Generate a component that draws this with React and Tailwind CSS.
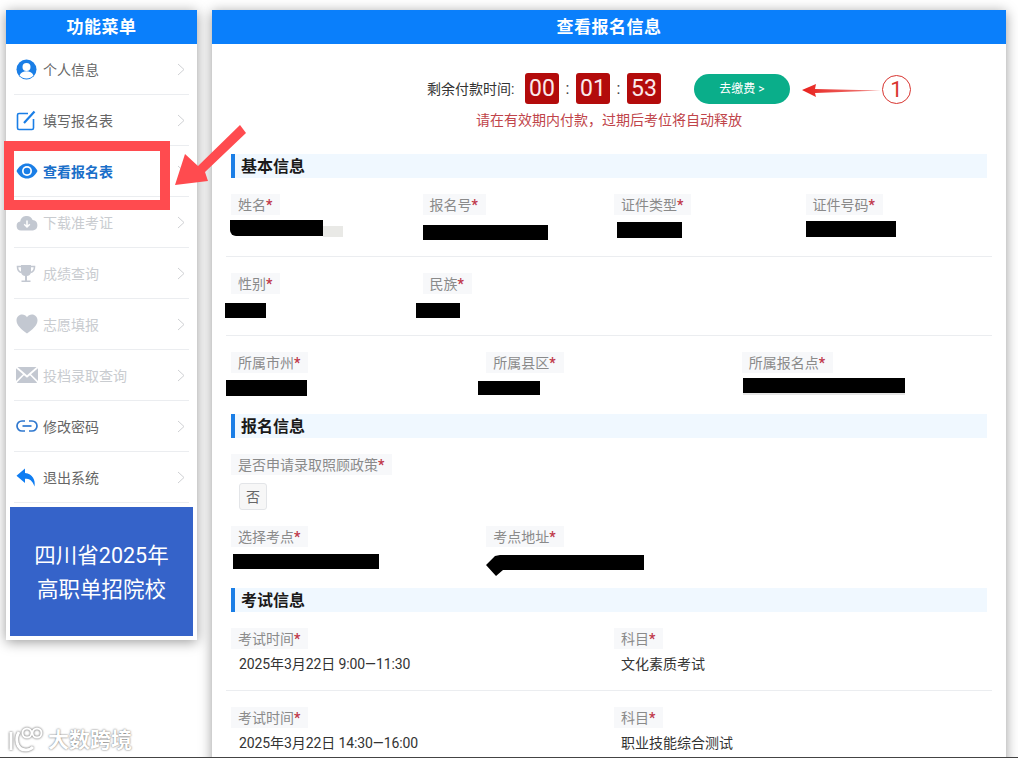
import React from "react";

const iconBlue = "#1a7ee6";
const iconGray = "#c3c8d1";

// menu icons, drawn to match the screenshot
const UserIcon = () => (
    <svg width="21" height="21" viewBox="0 0 21 21">
        <circle cx="10.5" cy="10.5" r="10" fill={iconBlue} />
        <circle cx="10.5" cy="8" r="4" fill="#fff" />
        <path d="M3.5 16.500c1.200-3 4-4.200 7-4.200s5.800 1.200 7 4.200c-1.800 1.900-4.300 3-7 3s-5.200-1.100-7-3z" fill="#fff" />
    </svg>
);

const EditIcon = () => (
    <svg width="21" height="21" viewBox="0 0 21 21" fill="none" stroke={iconBlue} strokeWidth="1.600">
        <path d="M12 3.500H3a1.500 1.500 0 0 0-1.500 1.500v13A1.500 1.500 0 0 0 3 19.500h13a1.500 1.500 0 0 0 1.500-1.500V9" />
        <path d="M8 13 18.500 1.500" strokeWidth="2.200" />
    </svg>
);

const EyeIcon = () => (
    <svg width="22" height="16" viewBox="0 0 22 16">
        <path d="M0.500 8C3 3 6.800 0.500 11 0.500S19 3 21.500 8C19 13 15.200 15.500 11 15.500S3 13 0.500 8z" fill={iconBlue} />
        <circle cx="11" cy="8" r="5" fill="#fff" />
        <circle cx="11" cy="8" r="3.300" fill={iconBlue} />
    </svg>
);

const CloudIcon = () => (
    <svg width="22" height="17" viewBox="0 0 22 17">
        <path d="M5 16.500a4.500 4.500 0 0 1-.8-8.900A6.500 6.500 0 0 1 16.600 6a5.300 5.300 0 0 1 .4 10.500z" fill={iconGray} />
        <path d="M11 6.500v6M8.200 10.200 11 13l2.800-2.800" fill="none" stroke="#fff" strokeWidth="1.500" />
    </svg>
);

const TrophyIcon = () => (
    <svg width="20" height="19" viewBox="0 0 20 19">
        <path d="M5 1h10v6.500c0 2.800-2.200 4.700-5 4.700s-5-1.900-5-4.700z" fill={iconGray} />
        <path d="M5 2.500H1.500c0 3.500 1.200 5.500 4 6M15 2.500h3.500c0 3.500-1.200 5.500-4 6" fill="none" stroke={iconGray} strokeWidth="1.600" />
        <path d="M9 12h2v4.500H9zM5.500 16.500h9V18h-9z" fill={iconGray} />
    </svg>
);

const HeartIcon = () => (
    <svg width="22" height="20" viewBox="0 0 22 20">
        <path d="M11 19.500C5.500 15.500.5 11.500.5 6.300.5 3 3 .5 6.100.5c2 0 3.800 1 4.900 2.700C12.100 1.500 13.900.5 15.900.5c3.100 0 5.600 2.500 5.600 5.800 0 5.200-5 9.200-10.500 13.200z" fill={iconGray} />
    </svg>
);

const MailIcon = () => (
    <svg width="22" height="16" viewBox="0 0 22 16">
        <path d="M1.500 0h19L11 8.200z" fill={iconGray} />
        <path d="M0 1.200 7 7.300 0 14zM22 1.200 15 7.300 22 14zM8 8.200l3 2.500 3-2.500L21 15.500a1 1 0 0 1-.5.500h-19a1 1 0 0 1-.5-.5z" fill={iconGray} />
    </svg>
);

const LinkIcon = () => (
    <svg width="22" height="12" viewBox="0 0 22 12" fill="none" stroke="#2f78cf" strokeWidth="1.700">
        <path d="M9 1H6a5 5 0 0 0 0 10h3M13 1h3a5 5 0 0 1 0 10h-3" />
        <path d="M6.500 6h9" />
    </svg>
);

const ReplyIcon = () => (
    <svg width="20" height="19" viewBox="0 0 20 19">
        <path d="M9 .5.500 7.700 9 15v-4.300c4.500 0 7.500 1.700 9.500 7.800 1.200-6.500-1.800-12.500-9.500-13.500z" fill="#0f7df2" />
    </svg>
);

const menu = [
    { label: "个人信息", icon: UserIcon },
    { label: "填写报名表", icon: EditIcon },
    { label: "查看报名表", icon: EyeIcon, active: true },
    { label: "下载准考证", icon: CloudIcon, disabled: true },
    { label: "成绩查询", icon: TrophyIcon, disabled: true },
    { label: "志愿填报", icon: HeartIcon, disabled: true },
    { label: "投档录取查询", icon: MailIcon, disabled: true },
    { label: "修改密码", icon: LinkIcon },
    { label: "退出系统", icon: ReplyIcon },
];

const MenuItem = ({ item }) => {
    const Icon = item.icon;
    let color = "text-[#666666]";
    if (item.active) color = "text-[#1a6fc9] font-bold";
    if (item.disabled) color = "text-[#c9ccd0]";

    return (
        <div className="mx-2 flex h-[51px] items-center border-b border-[#ebedf0] pl-[2px] pr-1">
            <span className="flex w-[27px] shrink-0 items-center"><Icon /></span>
            <span className={`flex-1 pt-[2px] text-sm ${color}`}>{item.label}</span>
            <svg width="8" height="13" viewBox="0 0 8 13" fill="none" stroke="#cfd1d4" strokeWidth="1">
                <path d="M1 1 7 6.500 1 12" />
            </svg>
        </div>
    );
};

const Sidebar = () => (
    <aside className="w-[191px] shrink-0 self-start bg-white pb-1 shadow-[0_2px_12px_rgba(0,0,0,0.4)]">
        <div className="flex h-[34px] items-center justify-center bg-[#0a7ffb] pt-[2px] text-[17px] font-bold tracking-[0.5px] text-white">功能菜单</div>
        {menu.map((item) => (
            <MenuItem key={item.label} item={item} />
        ))}
        <div className="mx-1 mt-1 flex h-[129px] flex-col items-center justify-center bg-[#3563c9] pt-[3px] text-[21.5px] leading-[34px] text-white">
            <div>四川省2025年</div>
            <div>高职单招院校</div>
        </div>
    </aside>
);

const Label = ({ children }) => (
    <div className="ml-[5px] flex h-[21px] w-fit items-center bg-[#f7f8fa] pl-[7px] pr-2 text-sm text-[#8a8a8a]">
        {children}
        <span className="font-bold text-[#c0394b]">*</span>
    </div>
);

// black marker strokes over the private values
const Redact = ({ className }) => <div className={`bg-black ${className}`} />;

const Section = ({ children }) => (
    <div className="mx-[5px] flex h-6 items-center border-l-4 border-[#1a7ee6] bg-[#f0f8ff] pl-[6px] pt-px text-[16px] font-bold text-[#1a1a1a]">{children}</div>
);

const Chip = ({ children }) => (
    <div className="flex h-[31px] w-[34px] items-center justify-center rounded-[3px] bg-[#b30b0b] pt-[2px] text-[23px] text-[#fbeaea]">{children}</div>
);

const Colon = () => <span className="w-[17px] text-center text-[#444444]">:</span>;

const ExamRow = ({ time, subject }) => (
    <div className="grid h-[79px] grid-cols-2 border-b border-[#ebedf0] pt-4">
        <div>
            <Label>考试时间</Label>
            <div className="ml-[13px] mt-[5px] text-sm tracking-[-0.1px] text-[#333333]">{time}</div>
        </div>
        <div>
            <Label>科目</Label>
            <div className="ml-3 mt-[5px] text-sm text-[#333333]">{subject}</div>
        </div>
    </div>
);

const Main = () => (
    <main className="w-[794px] shrink-0 bg-white shadow-[0_2px_12px_rgba(0,0,0,0.4)]">
        <div className="flex h-[34px] items-center justify-center bg-[#0a7ffb] pt-[2px] text-[17px] font-bold tracking-[0.5px] text-white">查看报名信息</div>
        <div className="px-[14px]">
            <div className="mt-[29px] flex h-[31px] items-center pl-[201px]">
                <span className="w-[98px] text-sm text-[#333333]">剩余付款时间:</span>
                <Chip>00</Chip>
                <Colon />
                <Chip>01</Chip>
                <Colon />
                <Chip>53</Chip>
                <div className="ml-[33px] flex h-[30px] w-24 items-center justify-center rounded-full bg-[#0aae8a] text-xs text-white">去缴费 &gt;</div>
            </div>
            <div className="mt-[6px] h-5 text-center text-sm leading-5 text-[#c0444a]">请在有效期内付款，过期后考位将自动释放</div>
            <div className="mt-6"><Section>基本信息</Section></div>

            <div className="grid h-[79px] grid-cols-4 border-b border-[#ebedf0] pt-4">
                <div>
                    <Label>姓名</Label>
                    <div className="ml-1 mt-[5px] flex">
                        <Redact className="h-4 w-[93px] rounded-bl-[6px]" />
                        <div className="mt-[6px] h-[11px] w-5 bg-[#e9e9e6]" />
                    </div>
                </div>
                <div>
                    <Label>报名号</Label>
                    <Redact className="ml-[5px] mt-[10px] h-[15px] w-[125px]" />
                </div>
                <div>
                    <Label>证件类型</Label>
                    <Redact className="ml-2 mt-[7px] h-4 w-[65px]" />
                </div>
                <div>
                    <Label>证件号码</Label>
                    <Redact className="ml-[5px] mt-[6px] h-4 w-[90px]" />
                </div>
            </div>

            <div className="grid h-[79px] grid-cols-4 border-b border-[#ebedf0] pt-4">
                <div>
                    <Label>性别</Label>
                    <Redact className="-ml-px mt-[9px] h-[15px] w-[41px]" />
                </div>
                <div>
                    <Label>民族</Label>
                    <Redact className="-ml-[2px] mt-[9px] h-[15px] w-11" />
                </div>
            </div>

            <div className="grid h-[78px] grid-cols-3 pt-4">
                <div>
                    <Label>所属市州</Label>
                    <Redact className="mt-[7px] h-4 w-[81px]" />
                </div>
                <div>
                    <Label>所属县区</Label>
                    <Redact className="-ml-[3px] mt-2 h-[14px] w-[62px]" />
                </div>
                <div>
                    <Label>所属报名点</Label>
                    <Redact className="ml-[6px] mt-[5px] h-[15px] w-[162px]" />
                    <div className="ml-[6px] h-[2px] w-[162px] bg-[#e4e4e4]" />
                </div>
            </div>

            <Section>报名信息</Section>
            <div className="mt-4"><Label>是否申请录取照顾政策</Label></div>
            <div className="ml-[13px] mt-2 flex h-[27px] w-7 items-center justify-center rounded-[3px] border border-[#e3e5e8] bg-[#f7f7f7] text-sm text-[#666666]">否</div>

            <div className="mt-4 grid h-[62px] grid-cols-3">
                <div>
                    <Label>选择考点</Label>
                    <Redact className="ml-[7px] mt-[7px] h-[15px] w-[146px]" />
                </div>
                <div>
                    <Label>考点地址</Label>
                    <svg className="ml-[5px] mt-[3px]" width="160" height="28" viewBox="0 0 160 28">
                        <path d="M0 15 9 6 14 5H158V20H17L10 26z" fill="#000" />
                    </svg>
                </div>
            </div>

            <Section>考试信息</Section>
            <ExamRow time="2025年3月22日 9:00—11:30" subject="文化素质考试" />
            <ExamRow time="2025年3月22日 14:30—16:00" subject="职业技能综合测试" />
        </div>
    </main>
);

export default function App() {
    return (
        <div className="relative h-[758px] w-[1018px] overflow-hidden border-b border-[#444444] bg-white font-['Roboto','Noto_Sans_CJK_SC',sans-serif]">
            <div className="flex gap-[15px] pl-[6px] pt-[10px]">
                <Sidebar />
                <Main />
            </div>

            {/* red annotations laid over the page */}
            <div className="absolute left-1 top-[141px] h-[69px] w-[166px] border-[10px] border-[#ff4b4f]" />
            <svg className="absolute left-0 top-0" width="1018" height="240" viewBox="0 0 1018 240">
                <defs>
                    <linearGradient id="arrowFade" x1="0" x2="1" y1="0" y2="0">
                        <stop offset="0" stopColor="#e8201c" />
                        <stop offset="1" stopColor="#f08a86" />
                    </linearGradient>
                </defs>
                <path d="M175 185 185 154 198 166 240 125 246 133 205 172 208 181z" fill="#ff4b4f" />
                <path d="M802 90 816 84 815 89 881 90.500 815 93 816 97z" fill="url(#arrowFade)" />
            </svg>
            <div className="absolute left-[882px] top-[75px] flex h-[29px] w-[29px] items-center justify-center rounded-full border border-[#d8342f] text-[22px] text-[#d8342f]">1</div>

            {/* watermark */}
            <div className="absolute left-2 top-[726px] flex items-center gap-[3px] text-[21px] font-bold leading-[28px] text-white [text-shadow:0_0_2px_#555555]">
                <svg className="drop-shadow-[0_0_1px_#555555]" width="37" height="28" viewBox="0 0 37 28" fill="none" stroke="#fff" strokeWidth="3">
                    <path d="M3 6v18M11 6C7 12 8 24 18 24c3 0 5-1 7-3" />
                    <circle cx="19" cy="7" r="4.500" strokeWidth="2" />
                    <circle cx="29" cy="7" r="4.500" strokeWidth="2" />
                </svg>
                <span>大数跨境</span>
            </div>
        </div>
    );
}
